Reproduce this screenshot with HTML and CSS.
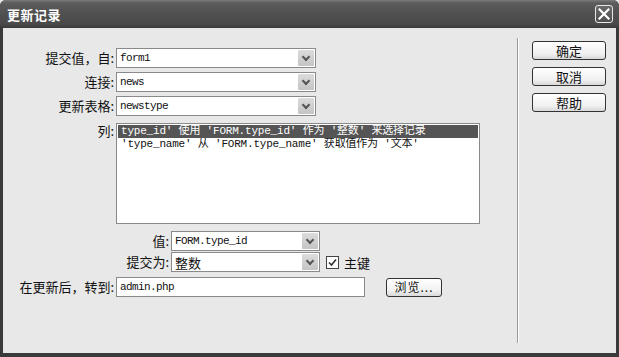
FILE: index.html
```html
<!DOCTYPE html>
<html lang="zh-CN">
<head>
    <meta charset="UTF-8">
    <title>更新记录</title>
    <link rel="stylesheet" href="styles.css">
</head>
<body>
    <div class="dialog">
        <div class="titlebar">
            <span class="title">更新记录</span>
            <span class="close">
                <svg width="12" height="12" viewBox="0 0 12 12"><path d="M1.5 1.5 L10.5 10.5 M10.5 1.5 L1.5 10.5" stroke="#fff" stroke-width="2.2" stroke-linecap="square"/></svg>
            </span>
        </div>
        <div class="body">
            <div class="form">
                <div class="row row-first">
                    <label class="label">提交值，自:</label>
                    <div class="select wide"><span class="mono">form1</span><span class="drop"></span></div>
                </div>
                <div class="row">
                    <label class="label">连接:</label>
                    <div class="select wide"><span class="mono">news</span><span class="drop"></span></div>
                </div>
                <div class="row">
                    <label class="label">更新表格:</label>
                    <div class="select wide"><span class="mono">newstype</span><span class="drop"></span></div>
                </div>
                <div class="row row-list">
                    <label class="label label-top">列:</label>
                    <div class="listbox">
                        <div class="item selected">type_id' 使用 'FORM.type_id' 作为 '整数' 来选择记录</div>
                        <div class="item">'type_name' 从 'FORM.type_name' 获取值作为 '文本'</div>
                    </div>
                </div>
                <div class="row row-value">
                    <label class="label label-inner">值:</label>
                    <div class="select narrow"><span class="mono">FORM.type_id</span><span class="drop"></span></div>
                </div>
                <div class="row row-submit">
                    <label class="label label-inner">提交为:</label>
                    <div class="select narrow"><span>整数</span><span class="drop"></span></div>
                    <span class="check">
                        <svg width="9" height="9" viewBox="0 0 9 9"><path d="M1 4.5 L3.5 7 L8 1.5" stroke="#333" stroke-width="1.6" fill="none"/></svg>
                    </span>
                    <span class="check-label">主键</span>
                </div>
                <div class="row row-goto">
                    <label class="label">在更新后，转到:</label>
                    <div class="input"><span class="mono">admin.php</span></div>
                    <button class="btn btn-browse">浏览...</button>
                </div>
            </div>
            <div class="sep"></div>
            <div class="buttons">
                <button class="btn">确定</button>
                <button class="btn">取消</button>
                <button class="btn">帮助</button>
            </div>
        </div>
    </div>
</body>
</html>
```

FILE: styles.css
```css
html, body {
    margin: 0;
    padding: 0;
    background: #e8e8e8;
}

.dialog {
    width: 619px;
    height: 357px;
    box-sizing: border-box;
    background: #3a3a3a;
    padding: 0 3px 4px 3px;
    border-radius: 6px 6px 0 0;
    display: flex;
    flex-direction: column;
    font-family: "Noto Sans CJK SC", sans-serif;
    font-size: 13px;
    color: #111;
}

.titlebar {
    height: 28px;
    margin: 0 -3px;
    padding: 0 7px;
    display: flex;
    align-items: center;
    justify-content: space-between;
    background: linear-gradient(#7a7a7a 0, #5c5c5c 3px, #505050 14px, #4a4a4a 24px, #3a3a3a 28px);
    border-radius: 6px 6px 0 0;
}

.title {
    color: #fff;
    font-weight: bold;
    font-size: 13px;
    letter-spacing: 0.5px;
    margin-top: 1px;
}

.close {
    width: 18px;
    height: 18px;
    box-sizing: border-box;
    border: 1px solid #e8e8e8;
    border-radius: 3px;
    background: linear-gradient(#6a6a6a, #505050);
    display: flex;
    align-items: center;
    justify-content: center;
    margin-right: -1px;
}

.body {
    flex: 1;
    background: #e8e8e8;
    display: flex;
}

.form {
    width: 514px;
    display: flex;
    flex-direction: column;
}

.row {
    display: flex;
    align-items: center;
    margin-top: 4px;
}

.row-first { margin-top: 20px; }
.row-list { margin-top: 7px; align-items: flex-start; }
.row-value { margin-top: 7px; }
.row-submit { margin-top: 1px; }
.row-goto { margin-top: 5px; }

.label {
    width: 113px;
    box-sizing: border-box;
    padding-right: 2px;
    text-align: right;
    white-space: nowrap;
    line-height: 20px;
}

.label-top { line-height: 16px; }

.label-inner { width: 168px; }

.select, .input {
    height: 20px;
    box-sizing: border-box;
    border: 1px solid #8a8a8a;
    background: #fff;
    position: relative;
    display: flex;
    align-items: center;
    padding-left: 3px;
    white-space: nowrap;
}

.wide { width: 200px; }
.narrow { width: 149px; }
.input { width: 249px; }

.mono {
    font-family: "Liberation Mono", monospace;
    font-size: 11px;
    letter-spacing: -0.6px;
}

.drop {
    position: absolute;
    right: 1px;
    top: 1px;
    width: 16px;
    height: 16px;
    background: linear-gradient(#dcdcdc, #c4c4c4);
    border-radius: 1px;
}

.drop::after {
    content: "";
    position: absolute;
    left: 5px;
    top: 4px;
    width: 4px;
    height: 4px;
    border-right: 2px solid #555;
    border-bottom: 2px solid #555;
    transform: rotate(45deg);
}

.listbox {
    width: 364px;
    height: 101px;
    box-sizing: border-box;
    border: 1px solid #8a8a8a;
    background: #fff;
    padding: 1px;
    font-family: "Liberation Mono", "Noto Sans CJK SC", monospace;
    font-size: 11px;
    letter-spacing: -0.2px;
}

.item {
    height: 13px;
    line-height: 13px;
    padding-left: 3px;
    white-space: nowrap;
    overflow: hidden;
}

.selected {
    background: #555;
    color: #fff;
}

.check {
    width: 13px;
    height: 13px;
    box-sizing: border-box;
    border: 1px solid #444;
    background: #fff;
    margin-left: 6px;
    display: flex;
    align-items: center;
    justify-content: center;
}

.check-label {
    margin-left: 5px;
}

.btn {
    width: 74px;
    height: 19px;
    box-sizing: border-box;
    border: 1px solid #333;
    border-radius: 3px;
    background: linear-gradient(#ffffff, #f0f0f0 70%, #d8d8d8);
    font-family: "Noto Sans CJK SC", sans-serif;
    font-size: 13px;
    color: #111;
    padding: 0;
    line-height: 16px;
}

.btn-browse {
    width: 56px;
    margin-left: 21px;
    font-size: 12px;
    letter-spacing: 1px;
}

.sep {
    width: 1px;
    margin: 10px 0 10px 0;
    background: #9a9a9a;
    border-right: 1px solid #fff;
}

.buttons {
    display: flex;
    flex-direction: column;
    gap: 7px;
    padding: 13px 0 0 13px;
}
```
